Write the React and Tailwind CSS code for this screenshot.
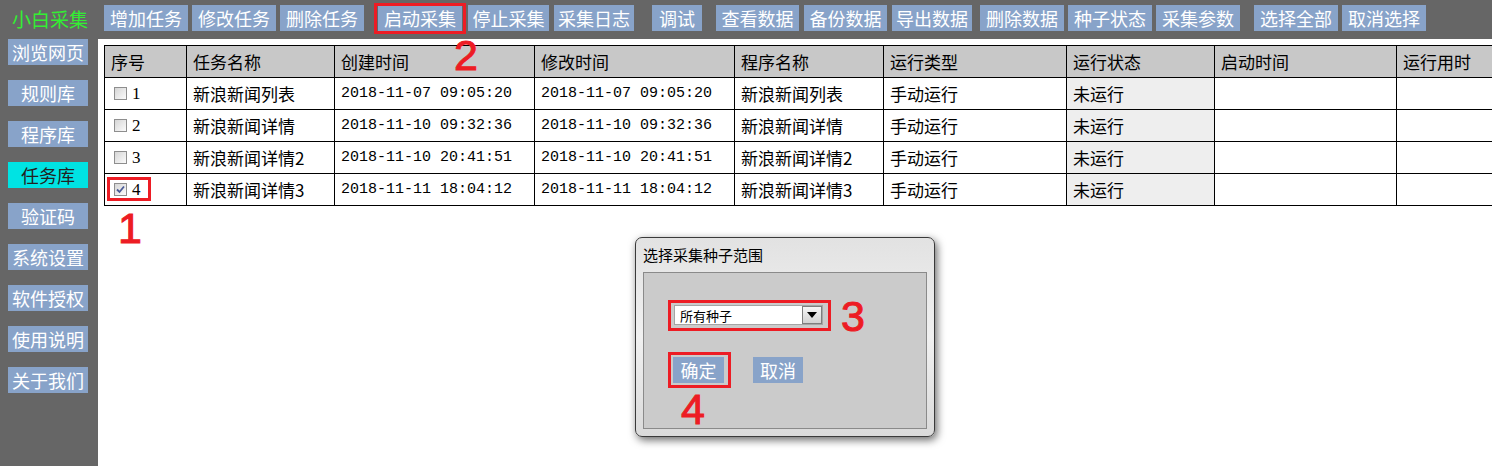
import React from "react";

const topButtons = [
  { t: "增加任务", c: "w-[84px]" },
  { t: "修改任务", c: "w-[84px] ml-[4px]" },
  { t: "删除任务", c: "w-[84px] ml-[4px]" },
  { t: "启动采集", c: "w-[84px] ml-[14px]" },
  { t: "停止采集", c: "w-[81px] ml-[6px]" },
  { t: "采集日志", c: "w-[80px] ml-[5px]" },
  { t: "调试", c: "w-[50px] ml-[18px]" },
  { t: "查看数据", c: "w-[83px] ml-[14px]" },
  { t: "备份数据", c: "w-[83px] ml-[5px]" },
  { t: "导出数据", c: "w-[80px] ml-[5px]" },
  { t: "删除数据", c: "w-[84px] ml-[8px]" },
  { t: "种子状态", c: "w-[84px] ml-[4px]" },
  { t: "采集参数", c: "w-[84px] ml-[4px]" },
  { t: "选择全部", c: "w-[84px] ml-[14px]" },
  { t: "取消选择", c: "w-[84px] ml-[4px]" },
];

const sideButtons = ["浏览网页", "规则库", "程序库", "任务库", "验证码", "系统设置", "软件授权", "使用说明", "关于我们"];

const cols = ["w-[82px]", "w-[148px]", "w-[200px]", "w-[200px]", "w-[149px]", "w-[183px]", "w-[148px]", "w-[182px]", "w-[200px]"];
const headers = ["序号", "任务名称", "创建时间", "修改时间", "程序名称", "运行类型", "运行状态", "启动时间", "运行用时"];

const rows = [
  { id: "1", name: "新浪新闻列表", c: "2018-11-07 09:05:20", m: "2018-11-07 09:05:20", p: "新浪新闻列表", checked: false },
  { id: "2", name: "新浪新闻详情", c: "2018-11-10 09:32:36", m: "2018-11-10 09:32:36", p: "新浪新闻详情", checked: false },
  { id: "3", name: "新浪新闻详情2", c: "2018-11-10 20:41:51", m: "2018-11-10 20:41:51", p: "新浪新闻详情2", checked: false },
  { id: "4", name: "新浪新闻详情3", c: "2018-11-11 18:04:12", m: "2018-11-11 18:04:12", p: "新浪新闻详情3", checked: true },
];

function Checkbox({ checked }) {
  return (
    <span className="w-[13px] h-[13px] border border-[#8e8e8e] bg-linear-to-br from-[#d6d6d6] to-[#fbfbfb] flex items-center justify-center">
      {checked && (
        <svg width="9" height="9" viewBox="0 0 9 9">
          <path d="M1 4.5 L3.5 7 L8 1.5" stroke="#4a5a96" strokeWidth="1.8" fill="none" />
        </svg>
      )}
    </span>
  );
}

function Annot({ n, cls }) {
  return (
    <div className={`absolute leading-none text-[43px] text-[#ed1c24] [-webkit-text-stroke:1px_#ed1c24] font-['Liberation_Sans',Arial,sans-serif] ${cls}`}>{n}</div>
  );
}

export default function App() {
  return (
    <div className="relative w-[1492px] h-[466px] overflow-hidden bg-[#666666] flex flex-col font-['Noto_Sans_CJK_SC',sans-serif]">
      {/* top bar */}
      <div className="h-[39px] shrink-0 flex items-start pt-[5px]">
        <div className="w-[104px] pl-[12px] h-[26px] flex items-center text-[19px] leading-none text-[#33ee33]">小白采集</div>
        {topButtons.map((b) => (
          <div key={b.t} className={`${b.c} h-[26px] shrink-0 bg-[#88a3c9] text-white text-[18px] leading-none flex items-center justify-center`}>
            {b.t}
          </div>
        ))}
      </div>

      <div className="flex flex-1 min-h-0">
        {/* sidebar */}
        <div className="w-[98px] shrink-0 flex flex-col items-start pl-[8px] gap-[15px]">
          {sideButtons.map((s) => (
            <div
              key={s}
              className={`w-[80px] h-[26px] text-[18px] leading-none flex items-center justify-center ${s === "任务库" ? "bg-[#00e3e3] text-[#222222]" : "bg-[#88a3c9] text-white"}`}
            >
              {s}
            </div>
          ))}
        </div>

        {/* content */}
        <div className="flex-1 min-w-0 bg-white pt-[6px] pl-[6px] overflow-hidden">
          <div className="w-[1700px] border-l border-t border-black text-[17px] text-black">
            <div className="flex h-[32px] border-b border-black bg-[#c8c8c8]">
              {headers.map((h, i) => (
                <div key={h} className={`${cols[i]} shrink-0 border-r border-black flex items-center pl-[6px] leading-none`}>{h}</div>
              ))}
            </div>
            {rows.map((r) => (
              <div key={r.id} className="flex h-[32px] border-b border-black">
                <div className={`${cols[0]} shrink-0 border-r border-black flex items-center pl-[9px] leading-none`}>
                  <Checkbox checked={r.checked} />
                  <span className="ml-[5px] font-['Liberation_Serif',serif] text-[17px]">{r.id}</span>
                </div>
                <div className={`${cols[1]} shrink-0 border-r border-black flex items-center pl-[6px] leading-none`}>{r.name}</div>
                <div className={`${cols[2]} shrink-0 border-r border-black flex items-center pl-[6px] leading-none font-['Liberation_Mono',monospace] text-[15px]`}>{r.c}</div>
                <div className={`${cols[3]} shrink-0 border-r border-black flex items-center pl-[6px] leading-none font-['Liberation_Mono',monospace] text-[15px]`}>{r.m}</div>
                <div className={`${cols[4]} shrink-0 border-r border-black flex items-center pl-[6px] leading-none`}>{r.p}</div>
                <div className={`${cols[5]} shrink-0 border-r border-black flex items-center pl-[6px] leading-none`}>手动运行</div>
                <div className={`${cols[6]} shrink-0 border-r border-black flex items-center pl-[6px] leading-none bg-[#eeeeee]`}>未运行</div>
                <div className={`${cols[7]} shrink-0 border-r border-black`} />
                <div className={`${cols[8]} shrink-0 border-r border-black`} />
              </div>
            ))}
          </div>
        </div>
      </div>

      {/* dialog */}
      <div className="absolute left-[635px] top-[237px] w-[300px] h-[200px] rounded-[7px] border border-[#3a3a3a] bg-linear-to-b from-[#e2e2e2] via-[#f1f1f1] to-[#dadada] shadow-[2px_3px_9px_rgba(0,0,0,0.6)] flex flex-col">
        <div className="h-[34px] shrink-0 pl-[7px] pt-[9px] text-[15px] leading-none text-black">选择采集种子范围</div>
        <div className="mx-[7px] mb-[7px] flex-1 border border-[#8a8a8a] bg-[#cbcbcb] pt-[32px] pl-[30px] flex flex-col items-start">
          <div className="w-[149px] h-[20px] border border-[#a5a5a5] bg-white flex items-center">
            <span className="pl-[5px] text-[13px] leading-none text-black">所有种子</span>
            <div className="ml-auto w-[20px] h-[18px] border border-[#7e7e7e] bg-linear-to-b from-[#f6f6f6] to-[#d2d2d2] flex items-center justify-center">
              <svg width="10" height="6" viewBox="0 0 10 6">
                <path d="M0 0 L10 0 L5 6 Z" fill="#000" />
              </svg>
            </div>
          </div>
          <div className="flex mt-[32px] -ml-[1px]">
            <div className="w-[51px] h-[26px] bg-[#88a3c9] text-white text-[18px] leading-none flex items-center justify-center">确定</div>
            <div className="w-[50px] h-[26px] ml-[29px] bg-[#88a3c9] text-white text-[18px] leading-none flex items-center justify-center">取消</div>
          </div>
        </div>
      </div>

      {/* annotations */}
      <div className="absolute left-[374px] top-[3px] w-[92px] h-[31px] border-[3px] border-[#ed1c24]" />
      <div className="absolute left-[107px] top-[177px] w-[44px] h-[24px] border-[3px] border-[#ed1c24]" />
      <div className="absolute left-[668px] top-[300px] w-[163px] h-[31px] border-[3px] border-[#ed1c24]" />
      <div className="absolute left-[668px] top-[352px] w-[63px] h-[36px] border-[3px] border-[#ed1c24]" />
      <Annot n="1" cls="left-[118px] top-[207px]" />
      <Annot n="2" cls="left-[454px] top-[34px]" />
      <Annot n="3" cls="left-[841px] top-[295px]" />
      <Annot n="4" cls="left-[681px] top-[388px]" />
    </div>
  );
}
